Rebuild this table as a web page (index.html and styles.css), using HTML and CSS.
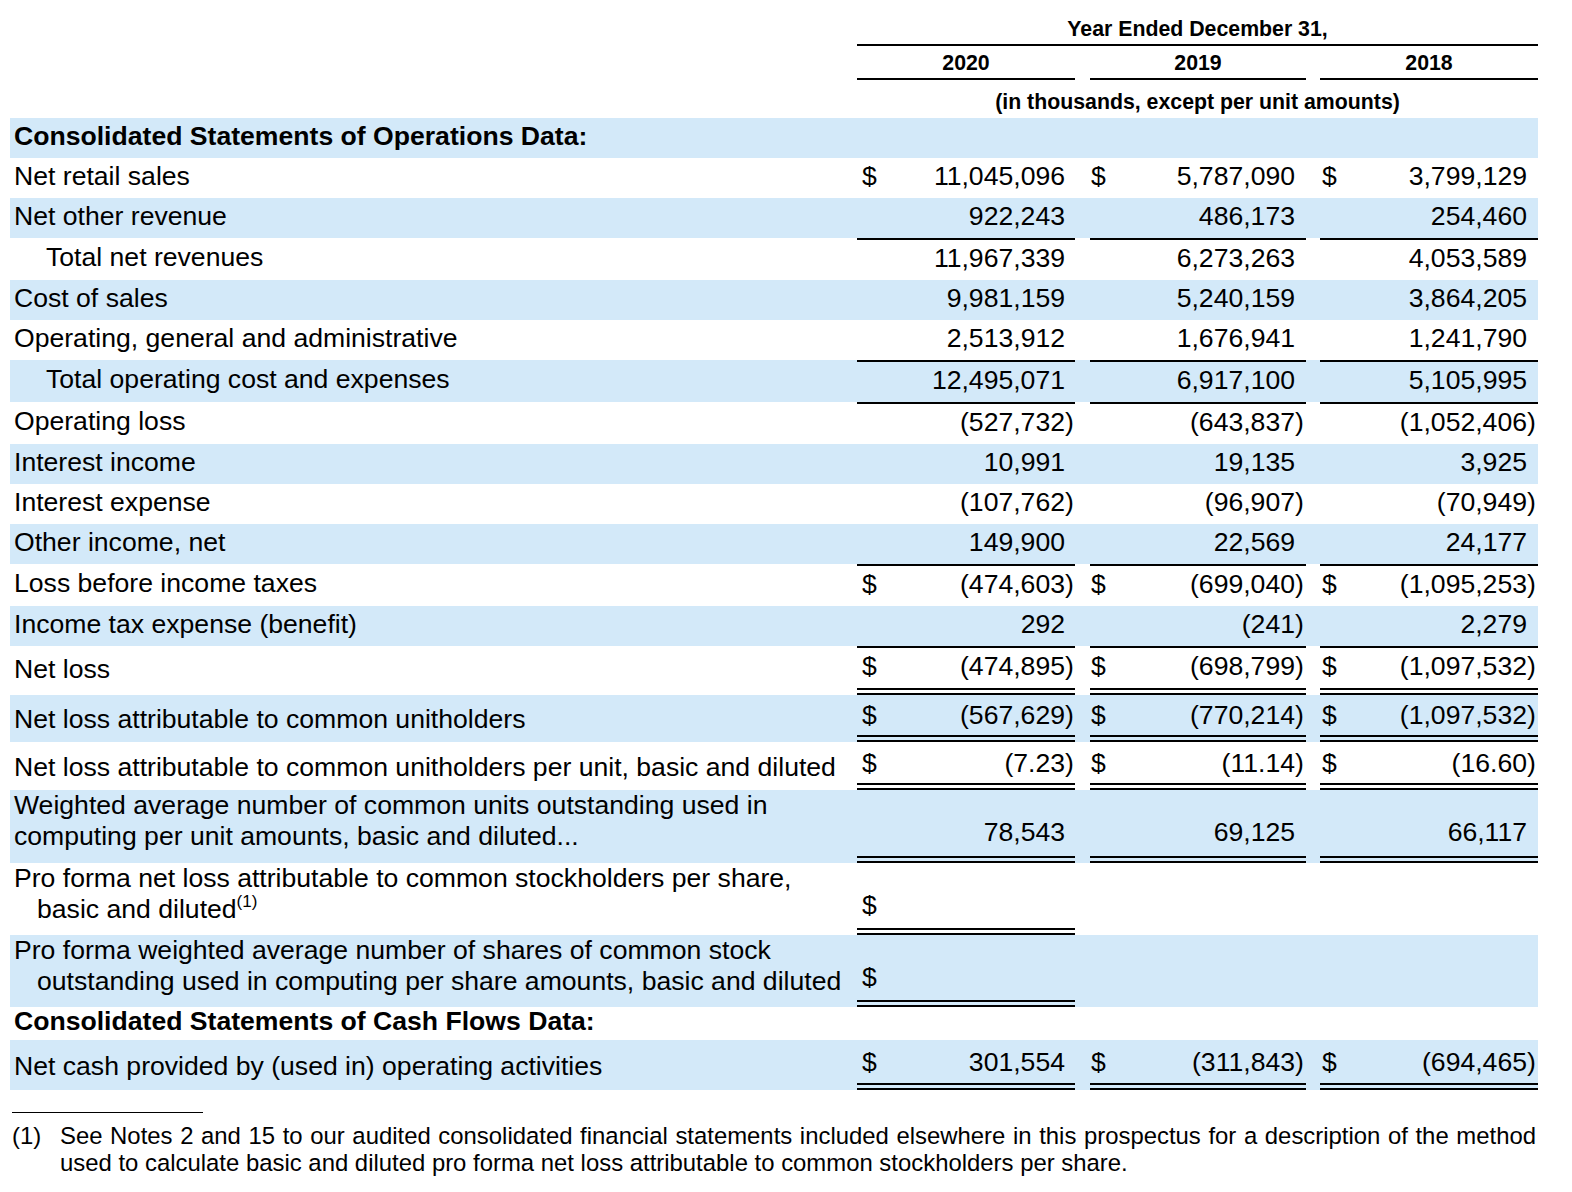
FILE: index.html
```html
<!DOCTYPE html>
<html lang="en">
<head>
<meta charset="utf-8">
<title>Selected Consolidated Financial Data</title>
<link rel="stylesheet" href="styles.css">
</head>
<body>
<div class="page">
<table class="fin">
  <colgroup>
    <col class="w-l">
    <col class="w-d"><col class="w-n1"><col class="w-p1">
    <col class="w-g1">
    <col class="w-d"><col class="w-n2"><col class="w-p2">
    <col class="w-g2">
    <col class="w-d"><col class="w-n3"><col class="w-p3">
  </colgroup>
  <thead>
    <tr class="h0">
      <td class="l"></td>
      <th colspan="11" class="hd">Year Ended December 31,</th>
    </tr>
    <tr class="h1">
      <td class="l"></td>
      <th colspan="3" class="hd">2020</th>
      <td class="g"></td>
      <th colspan="3" class="hd">2019</th>
      <td class="g"></td>
      <th colspan="3" class="hd">2018</th>
    </tr>
    <tr class="h2">
      <td class="l"></td>
      <th colspan="11" class="hd">(in thousands, except per unit amounts)</th>
    </tr>
  </thead>
  <tbody>
    <tr class="shade">
      <td class="l b">Consolidated Statements of Operations Data:</td>
      <td></td><td></td><td></td><td class="g"></td><td></td><td></td><td></td><td class="g"></td><td></td><td></td><td></td>
    </tr>
    <tr>
      <td class="l">Net retail sales</td>
      <td class="d d1">$</td><td class="n">11,045,096</td><td class="p"></td><td class="g"></td>
      <td class="d d2">$</td><td class="n">5,787,090</td><td class="p"></td><td class="g"></td>
      <td class="d d3">$</td><td class="n">3,799,129</td><td class="p"></td>
    </tr>
    <tr class="shade">
      <td class="l">Net other revenue</td>
      <td class="d"></td><td class="n">922,243</td><td class="p"></td><td class="g"></td>
      <td class="d"></td><td class="n">486,173</td><td class="p"></td><td class="g"></td>
      <td class="d"></td><td class="n">254,460</td><td class="p"></td>
    </tr>
    <tr class="bt">
      <td class="l ind">Total net revenues</td>
      <td class="d"></td><td class="n">11,967,339</td><td class="p"></td><td class="g"></td>
      <td class="d"></td><td class="n">6,273,263</td><td class="p"></td><td class="g"></td>
      <td class="d"></td><td class="n">4,053,589</td><td class="p"></td>
    </tr>
    <tr class="shade">
      <td class="l">Cost of sales</td>
      <td class="d"></td><td class="n">9,981,159</td><td class="p"></td><td class="g"></td>
      <td class="d"></td><td class="n">5,240,159</td><td class="p"></td><td class="g"></td>
      <td class="d"></td><td class="n">3,864,205</td><td class="p"></td>
    </tr>
    <tr>
      <td class="l">Operating, general and administrative</td>
      <td class="d"></td><td class="n">2,513,912</td><td class="p"></td><td class="g"></td>
      <td class="d"></td><td class="n">1,676,941</td><td class="p"></td><td class="g"></td>
      <td class="d"></td><td class="n">1,241,790</td><td class="p"></td>
    </tr>
    <tr class="shade bt">
      <td class="l ind">Total operating cost and expenses</td>
      <td class="d"></td><td class="n">12,495,071</td><td class="p"></td><td class="g"></td>
      <td class="d"></td><td class="n">6,917,100</td><td class="p"></td><td class="g"></td>
      <td class="d"></td><td class="n">5,105,995</td><td class="p"></td>
    </tr>
    <tr class="bt">
      <td class="l">Operating loss</td>
      <td class="d"></td><td class="n">(527,732</td><td class="p">)</td><td class="g"></td>
      <td class="d"></td><td class="n">(643,837</td><td class="p">)</td><td class="g"></td>
      <td class="d"></td><td class="n">(1,052,406</td><td class="p">)</td>
    </tr>
    <tr class="shade">
      <td class="l">Interest income</td>
      <td class="d"></td><td class="n">10,991</td><td class="p"></td><td class="g"></td>
      <td class="d"></td><td class="n">19,135</td><td class="p"></td><td class="g"></td>
      <td class="d"></td><td class="n">3,925</td><td class="p"></td>
    </tr>
    <tr>
      <td class="l">Interest expense</td>
      <td class="d"></td><td class="n">(107,762</td><td class="p">)</td><td class="g"></td>
      <td class="d"></td><td class="n">(96,907</td><td class="p">)</td><td class="g"></td>
      <td class="d"></td><td class="n">(70,949</td><td class="p">)</td>
    </tr>
    <tr class="shade">
      <td class="l">Other income, net</td>
      <td class="d"></td><td class="n">149,900</td><td class="p"></td><td class="g"></td>
      <td class="d"></td><td class="n">22,569</td><td class="p"></td><td class="g"></td>
      <td class="d"></td><td class="n">24,177</td><td class="p"></td>
    </tr>
    <tr class="bt">
      <td class="l">Loss before income taxes</td>
      <td class="d d1">$</td><td class="n">(474,603</td><td class="p">)</td><td class="g"></td>
      <td class="d d2">$</td><td class="n">(699,040</td><td class="p">)</td><td class="g"></td>
      <td class="d d3">$</td><td class="n">(1,095,253</td><td class="p">)</td>
    </tr>
    <tr class="shade">
      <td class="l">Income tax expense (benefit)</td>
      <td class="d"></td><td class="n">292</td><td class="p"></td><td class="g"></td>
      <td class="d"></td><td class="n">(241</td><td class="p">)</td><td class="g"></td>
      <td class="d"></td><td class="n">2,279</td><td class="p"></td>
    </tr>
    <tr class="bt bb r-netloss">
      <td class="l">Net loss</td>
      <td class="d d1">$</td><td class="n">(474,895</td><td class="p">)</td><td class="g"></td>
      <td class="d d2">$</td><td class="n">(698,799</td><td class="p">)</td><td class="g"></td>
      <td class="d d3">$</td><td class="n">(1,097,532</td><td class="p">)</td>
    </tr>
    <tr class="shade bb r-attr">
      <td class="l">Net loss attributable to common unitholders</td>
      <td class="d d1">$</td><td class="n">(567,629</td><td class="p">)</td><td class="g"></td>
      <td class="d d2">$</td><td class="n">(770,214</td><td class="p">)</td><td class="g"></td>
      <td class="d d3">$</td><td class="n">(1,097,532</td><td class="p">)</td>
    </tr>
    <tr class="bb r-perunit">
      <td class="l">Net loss attributable to common unitholders per unit, basic and diluted</td>
      <td class="d d1">$</td><td class="n">(7.23</td><td class="p">)</td><td class="g"></td>
      <td class="d d2">$</td><td class="n">(11.14</td><td class="p">)</td><td class="g"></td>
      <td class="d d3">$</td><td class="n">(16.60</td><td class="p">)</td>
    </tr>
    <tr class="shade bb two r-weighted">
      <td class="l">Weighted average number of common units outstanding used in<br>computing per unit amounts, basic and diluted...</td>
      <td class="d"></td><td class="n">78,543</td><td class="p"></td><td class="g"></td>
      <td class="d"></td><td class="n">69,125</td><td class="p"></td><td class="g"></td>
      <td class="d"></td><td class="n">66,117</td><td class="p"></td>
    </tr>
    <tr class="bb1 two r-pf">
      <td class="l hang">Pro forma net loss attributable to common stockholders per share,<br>basic and diluted<sup>(1)</sup></td>
      <td class="d d1 c1">$</td><td class="n c1"></td><td class="p c1"></td><td class="g"></td>
      <td class="d"></td><td class="n"></td><td class="p"></td><td class="g"></td>
      <td class="d"></td><td class="n"></td><td class="p"></td>
    </tr>
    <tr class="shade bb1 two r-pf">
      <td class="l hang">Pro forma weighted average number of shares of common stock<br>outstanding used in computing per share amounts, basic and diluted</td>
      <td class="d d1 c1">$</td><td class="n c1"></td><td class="p c1"></td><td class="g"></td>
      <td class="d"></td><td class="n"></td><td class="p"></td><td class="g"></td>
      <td class="d"></td><td class="n"></td><td class="p"></td>
    </tr>
    <tr class="r-cfhead">
      <td class="l b">Consolidated Statements of Cash Flows Data:</td>
      <td></td><td></td><td></td><td class="g"></td><td></td><td></td><td></td><td class="g"></td><td></td><td></td><td></td>
    </tr>
    <tr class="shade bb r-cash">
      <td class="l">Net cash provided by (used in) operating activities</td>
      <td class="d d1">$</td><td class="n">301,554</td><td class="p"></td><td class="g"></td>
      <td class="d d2">$</td><td class="n">(311,843</td><td class="p">)</td><td class="g"></td>
      <td class="d d3">$</td><td class="n">(694,465</td><td class="p">)</td>
    </tr>
  </tbody>
</table>

<div class="rule"></div>
<div class="note">
  <span class="note-num">(1)</span>
  <span class="note-text">See Notes 2 and 15 to our audited consolidated financial statements included elsewhere in this prospectus for a description of the method used to calculate basic and diluted pro forma net loss attributable to common stockholders per share.</span>
</div>
</div>
</body>
</html>
```

FILE: styles.css
```css
html, body {
  margin: 0;
  padding: 0;
  background: #ffffff;
}

body {
  font-family: "Liberation Sans", Arial, Helvetica, sans-serif;
  color: #000000;
}

.page {
  padding-left: 10px;
}

.fin {
  border-collapse: separate;
  border-spacing: 0;
  table-layout: fixed;
  width: 1528px;
  font-size: 26.6px;
  line-height: 32px;
}

.w-l { width: 847px; }
.w-d { width: 24px; }
.w-n1 { width: 184px; }
.w-p1 { width: 10px; }
.w-n2 { width: 181px; }
.w-p2 { width: 11px; }
.w-n3 { width: 183px; }
.w-p3 { width: 11px; }
.w-g1 { width: 15px; }
.w-g2 { width: 14px; }

.fin td,
.fin th {
  padding: 2px 0 6px 0;
  white-space: nowrap;
  vertical-align: middle;
}

/* header rows */
.fin thead th,
.fin thead td {
  font-size: 21.3px;
  line-height: 24px;
  font-weight: bold;
  text-align: center;
}

.h0 td, .h0 th { padding: 17px 0 3px 0; }
.h0 th { border-bottom: 2px solid #000; }

.h1 td, .h1 th { padding: 5px 0 3px 0; }
.h1 th { border-bottom: 2px solid #000; }

.h2 td, .h2 th { padding: 10px 0 4px 0; }

/* body */
.shade { background: #d3e9f9; }

.fin td.l {
  padding-left: 4px;
  text-align: left;
}

.fin td.ind { padding-left: 36px; }

.b { font-weight: bold; }

.d { text-align: left; }
.d1 { padding-left: 5px !important; }
.d2 { padding-left: 1px !important; }
.d3 { padding-left: 2px !important; }

.n { text-align: right; }
.p { text-align: left; }

/* single rule above a row (subtotal) */
.bt .d, .bt .n, .bt .p {
  border-top: 2px solid #000;
}

/* double rule below a row (total) */
.bb .d, .bb .n, .bb .p {
  border-bottom: 7px double #000;
}

.bb1 .c1 {
  border-bottom: 7px double #000;
}

.r-netloss td { padding-bottom: 6px; }
.r-attr td { padding-top: 4px; padding-bottom: 4px; }
.r-perunit td { padding-top: 5px; padding-bottom: 4px; }

/* two-line rows */
.two td.l {
  line-height: 31px;
  padding-top: 0;
  white-space: nowrap;
}

.r-weighted td.l { padding-bottom: 11px; }
.r-weighted td.d,
.r-weighted td.n,
.r-weighted td.p {
  vertical-align: bottom;
  padding-top: 0;
  padding-bottom: 8px;
}

.r-pf td.l { padding-bottom: 10px; }
.r-pf td.d,
.r-pf td.n,
.r-pf td.p {
  vertical-align: bottom;
  padding-top: 0;
  padding-bottom: 7px;
}

.fin td.hang {
  padding-left: 27px;
  text-indent: -23px;
}

sup {
  font-size: 17px;
  line-height: 0;
  vertical-align: 11px;
}

.r-cfhead td {
  line-height: 28px;
  padding-top: 0;
  padding-bottom: 5px;
}

.r-cash td {
  padding-top: 6px;
  padding-bottom: 5px;
}

/* footnote */
.rule {
  width: 191px;
  margin: 22px 0 0 2px;
  border-top: 1px solid #000;
}

.note {
  display: flex;
  margin-top: 9px;
  margin-left: 2px;
  font-size: 23.9px;
  line-height: 27px;
}

.note-num {
  flex: 0 0 48px;
}

.note-text {
  width: 1476px;
  text-align: justify;
}
```
